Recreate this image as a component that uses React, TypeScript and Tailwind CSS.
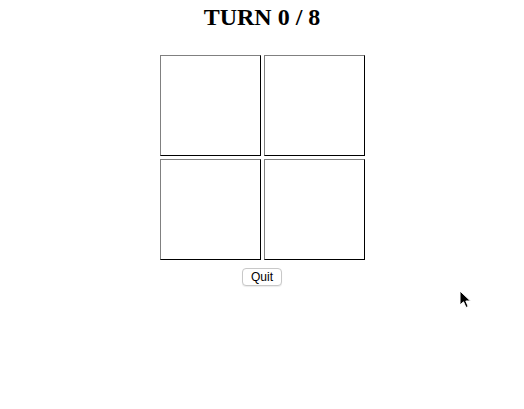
import React from 'react';

const cells = [0, 1, 2, 3];

export default function App() {
  return (
    <div className="relative w-[524px] h-[409px] bg-white overflow-hidden">
      <h1 className="pt-[3px] text-center font-['Liberation_Serif',serif] font-bold text-[24px] leading-[28px] text-black">
        TURN 0 / 8
      </h1>

      <div className="mt-[24px] flex justify-center">
        <div className="grid grid-cols-[101px_101px] grid-rows-[101px_101px] gap-[3px]">
          {cells.map((c) => (
            <div
              key={c}
              className="bg-white border border-t-[#808080] border-l-[#808080] border-r-black border-b-black"
            />
          ))}
        </div>
      </div>

      <div className="mt-[8px] flex justify-center">
        <button className="h-[18px] w-[40px] rounded-[4px] border border-[#c8c8c8] bg-white text-[12px] leading-[16px] text-black font-['Liberation_Sans',sans-serif] shadow-[0_1px_1px_rgba(0,0,0,0.08)]">
          Quit
        </button>
      </div>

      {/* mouse pointer */}
      <svg
        className="absolute left-[459px] top-[290px]"
        width="14"
        height="20"
        viewBox="0 0 14 20"
      >
        <path
          d="M1 1 L1 15 L4.5 11.8 L7 17.5 L9.2 16.5 L6.8 11 L11.5 11 Z"
          fill="black"
          stroke="white"
          strokeWidth="1"
          strokeLinejoin="round"
        />
      </svg>
    </div>
  );
}
